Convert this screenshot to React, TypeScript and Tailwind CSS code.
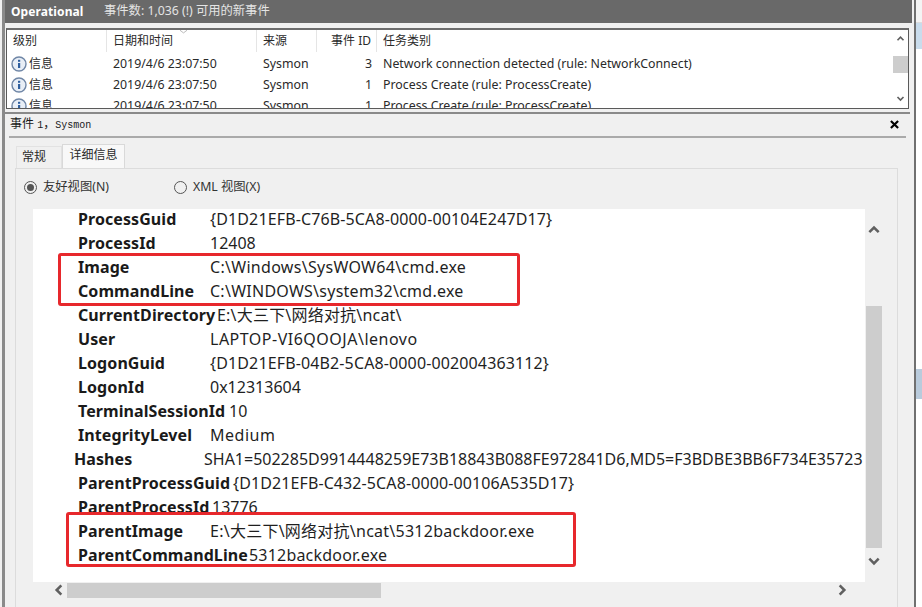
const latin = "font-['Noto_Sans','Noto_Sans_CJK_SC',sans-serif]";

function Chevron({ dir, cls }: { dir: "up" | "down" | "left" | "right"; cls: string }) {
  const d = {
    up: "M2 7 L6 3 L10 7",
    down: "M2 4 L6 8 L10 4",
    left: "M8 2 L4 6 L8 10",
    right: "M4 2 L8 6 L4 10",
  }[dir];
  return (
    <svg viewBox="0 0 12 12" className={cls} fill="none" stroke="#606060" strokeWidth="2.2">
      <path d={d} />
    </svg>
  );
}

function InfoIcon() {
  return (
    <svg viewBox="0 0 16 16" className="w-[16px] h-[16px] shrink-0">
      <circle cx="8" cy="8" r="7" fill="#e8eef6" stroke="#6f86a6" strokeWidth="1.4" />
      <rect x="7" y="7" width="2.2" height="5" fill="#2f5f9e" />
      <rect x="7" y="3.8" width="2.2" height="2" fill="#2f5f9e" />
    </svg>
  );
}

const events = [
  { id: "3", task: "Network connection detected (rule: NetworkConnect)" },
  { id: "1", task: "Process Create (rule: ProcessCreate)" },
  { id: "1", task: "Process Create (rule: ProcessCreate)" },
];

function ListRow({ id, task }: { id: string; task: string }) {
  return (
    <div className="flex items-center h-[21px] shrink-0 text-[12.35px] text-[#2a2a2a] whitespace-nowrap">
      <div className="w-[100px] pl-[4px] flex items-center gap-[2px] text-[12px]">
        <InfoIcon />
        <span>信息</span>
      </div>
      <div className="w-[150px] pl-[6px] pt-[2px]">2019/4/6 23:07:50</div>
      <div className="w-[60px] pl-[6px] pt-[2px]">Sysmon</div>
      <div className="w-[60px] pr-[5px] pt-[2px] text-right">{id}</div>
      <div className="pl-[6px] pt-[2px]">{task}</div>
    </div>
  );
}

function HeaderCell({ w, cls, children }: { w: string; cls: string; children: React.ReactNode }) {
  return <div className={`${w} ${cls} h-full flex items-center border-r border-[#e5e5e5]`}>{children}</div>;
}

function Row({
  k,
  v,
  labelW = "w-[132px]",
  cls = "",
  vCls = "",
}: {
  k: string;
  v: string;
  labelW?: string;
  cls?: string;
  vCls?: string;
}) {
  return (
    <div className={`flex items-center h-[24px] whitespace-nowrap ${cls}`}>
      <div className={`${labelW} shrink-0 font-bold text-[#1a1a1a] tracking-[0.08px]`}>{k}</div>
      <div className={`text-[#1f1f1f] ${vCls}`}>{v}</div>
    </div>
  );
}

export default function App() {
  return (
    <div className={`w-[922px] h-[607px] overflow-hidden bg-[#f0f0f0] flex ${latin}`}>
      <div className="w-[916px] h-full shrink-0 pl-[2px] border-r-2 border-[#707070]">
        <div className="h-full flex flex-col border-l-[3px] border-l-[#8a8a8a]">
          {/* title bar */}
          <div className="h-[23px] shrink-0 mr-[2px] bg-[#696969] flex items-center pl-[6px] text-white text-[12px] whitespace-nowrap">
            <span className="font-bold w-[93px] tracking-[0.1px]">Operational</span>
            <span className="text-[#e4e4e4] text-[12.3px]">事件数: 1,036 (!) 可用的新事件</span>
          </div>
          <div className="h-[5px] shrink-0 bg-[#f0f0f0]" />
          {/* event list */}
          <div className="h-[81px] shrink-0 ml-[1px] w-[903px] bg-white border border-[#5a5a5a] border-t-[2px] border-t-[#6c6c6c] flex overflow-hidden">
            <div className="flex-1 flex flex-col min-w-0 overflow-hidden">
              <div className="h-[23px] shrink-0 pb-[1px] flex items-center text-[12px] text-[#2a2a2a] relative">
                <HeaderCell w="w-[100px]" cls="pl-[6px]">级别</HeaderCell>
                <HeaderCell w="w-[150px]" cls="pl-[6px]">日期和时间</HeaderCell>
                <HeaderCell w="w-[60px]" cls="pl-[6px]">来源</HeaderCell>
                <HeaderCell w="w-[60px]" cls="justify-end pr-[5px]">事件 ID</HeaderCell>
                <div className="pl-[6px]">任务类别</div>
                <svg viewBox="0 0 8 4" className="absolute left-[173px] top-0 w-[7px] h-[4px]" fill="none" stroke="#b0b0b0">
                  <path d="M0 0 L4 3 L8 0" />
                </svg>
              </div>
              {events.map((e, i) => (
                <ListRow key={i} id={e.id} task={e.task} />
              ))}
            </div>
            <div className="w-[18px] shrink-0 flex flex-col items-end">
              <div className="w-[15px] h-[17px] mt-[1px] flex items-center justify-center">
                <Chevron dir="up" cls="w-[9px] h-[9px]" />
              </div>
              <div className="w-[15px] h-[17px] mt-[8px] bg-[#cdcdcd]" />
              <div className="w-[15px] mt-[17px] h-[17px] flex items-center justify-center">
                <Chevron dir="down" cls="w-[9px] h-[9px]" />
              </div>
            </div>
          </div>
          <div className="h-[3px] shrink-0" />
          <div className="h-[2px] shrink-0 bg-[#8a8a8a] w-[905px]" />
          {/* detail header */}
          <div className="h-[22px] shrink-0 pb-[2px] flex items-center justify-between pl-[5px] pr-[15px] text-[12px] text-[#1a1a1a] whitespace-nowrap">
            <span>
              事件 <span className="font-['Liberation_Mono',monospace] text-[10px]">1</span>，
              <span className="font-['Liberation_Mono',monospace] text-[10px]">Sysmon</span>
            </span>
            <svg viewBox="0 0 10 10" className="w-[9px] h-[9px]" stroke="#000" strokeWidth="2.4">
              <path d="M1 1 L9 9 M9 1 L1 9" />
            </svg>
          </div>
          <div className="h-[2px] shrink-0 bg-[#aaaaaa] ml-[4px] w-[897px]" />
          {/* tabs */}
          <div className="h-[6px] shrink-0" />
          <div className="h-[24px] shrink-0 flex items-end pl-[11px] text-[12px] text-[#2a2a2a]">
            <div className="w-[46px] h-[22px] pr-[10px] pb-[1px] flex items-center justify-center bg-[#f0f0f0] border border-b-0 border-[#e2e2e2]">常规</div>
            <div className="w-[63px] h-[24px] pb-[3px] flex items-center justify-center bg-[#f8f8f8] border border-b-0 border-[#d9d9d9]">详细信息</div>
          </div>
          {/* tab panel */}
          <div className="flex-1 min-h-0 ml-[10px] w-[883px] border border-b-0 border-[#dcdcdc] flex flex-col">
            <div className="h-[40px] pb-[3px] shrink-0 flex items-center text-[12.3px] text-[#333] whitespace-nowrap pl-[8px]">
              <div className="w-[150px] flex items-center gap-[6px]">
                <span className="w-[13px] h-[13px] rounded-full border border-[#555] flex items-center justify-center">
                  <span className="w-[7px] h-[7px] rounded-full bg-[#555]" />
                </span>
                <span>友好视图(N)</span>
              </div>
              <div className="flex items-center gap-[6px]">
                <span className="w-[13px] h-[13px] rounded-full border border-[#555]" />
                <span>XML 视图(X)</span>
              </div>
            </div>
            <div className="flex ml-[17px]">
              {/* details text */}
              <div className="w-[832px] h-[373px] bg-white overflow-hidden shrink-0 pl-[45px] text-[16px] leading-[24px] relative">
                <div className="-mt-[2px]">
                  <Row k="ProcessGuid" v="{D1D21EFB-C76B-5CA8-0000-00104E247D17}" vCls="tracking-[0.13px]" />
                  <Row k="ProcessId" v="12408" />
                  <Row k="Image" v="C:\Windows\SysWOW64\cmd.exe" vCls="tracking-[0.3px]" />
                  <Row k="CommandLine" v="C:\WINDOWS\system32\cmd.exe" vCls="tracking-[0.26px]" />
                  <Row k="CurrentDirectory" v="E:\大三下\网络对抗\ncat\" labelW="w-[139px]" vCls="tracking-[0.2px]" />
                  <Row k="User" v="LAPTOP-VI6QOOJA\lenovo" vCls="tracking-[0.5px]" />
                  <Row k="LogonGuid" v="{D1D21EFB-04B2-5CA8-0000-002004363112}" vCls="tracking-[0.13px]" />
                  <Row k="LogonId" v="0x12313604" />
                  <Row k="TerminalSessionId" v="10" labelW="w-[151px]" />
                  <Row k="IntegrityLevel" v="Medium" vCls="tracking-[0.5px]" />
                  <Row k="Hashes" v="SHA1=502285D9914448259E73B18843B088FE972841D6,MD5=F3BDBE3BB6F734E35723" cls="-ml-[4px] -mr-[40px]" labelW="w-[130px]" />
                  <Row k="ParentProcessGuid" v="{D1D21EFB-C432-5CA8-0000-00106A535D17}" labelW="w-[155px]" vCls="tracking-[0.1px]" />
                  <div className="h-[17px] overflow-hidden">
                    <Row k="ParentProcessId" v="13776" labelW="w-[134px]" />
                  </div>
                  <div className="relative h-[55px] -ml-[12px] w-[510px] pl-[12px] pt-[6px] bg-white border-[3px] border-[#e7282c] rounded-[3px] box-border">
                    <div className="-ml-[3px] -mt-[2px]">
                      <Row k="ParentImage" v="E:\大三下\网络对抗\ncat\5312backdoor.exe" vCls="tracking-[0.25px]" />
                      <Row k="ParentCommandLine" v="5312backdoor.exe" labelW="w-[171px]" vCls="tracking-[0.2px]" />
                    </div>
                  </div>
                </div>
                <div className="absolute left-[25px] top-[44px] w-[462px] h-[53px] border-[3px] border-[#e7282c] rounded-[3px]" />
              </div>
              {/* vertical scrollbar */}
              <div className="w-[16px] ml-[1px] flex flex-col shrink-0 h-[373px]">
                <div className="h-[33px] flex items-end justify-center pb-[4px]">
                  <Chevron dir="up" cls="w-[14px] h-[14px]" />
                </div>
                <div className="h-[64px]" />
                <div className="h-[242px] bg-[#cdcdcd]" />
                <div className="flex-1 flex items-center justify-center pb-[9px]">
                  <Chevron dir="down" cls="w-[14px] h-[14px]" />
                </div>
              </div>
            </div>
            {/* horizontal scrollbar */}
            <div className="ml-[17px] w-[832px] h-[16px] flex items-center">
              <div className="w-[34px] flex justify-end pr-[1px]">
                <Chevron dir="left" cls="w-[14px] h-[14px]" />
              </div>
              <div className="w-[314px] h-[15px] bg-[#cdcdcd]" />
              <div className="ml-[454px]">
                <Chevron dir="right" cls="w-[14px] h-[14px]" />
              </div>
            </div>
          </div>
        </div>
      </div>
      {/* neighbouring pane */}
      <div className="flex-1 flex flex-col">
        <div className="h-[23px] bg-[#f4f4f4] border-b border-[#dddddd]" />
        <div className="h-[26px] bg-[#c9dcec]" />
        <div className="h-[320px] bg-white" />
        <div className="h-[30px] bg-[#b9cbdc]" />
        <div className="flex-1 bg-white" />
      </div>
    </div>
  );
}
